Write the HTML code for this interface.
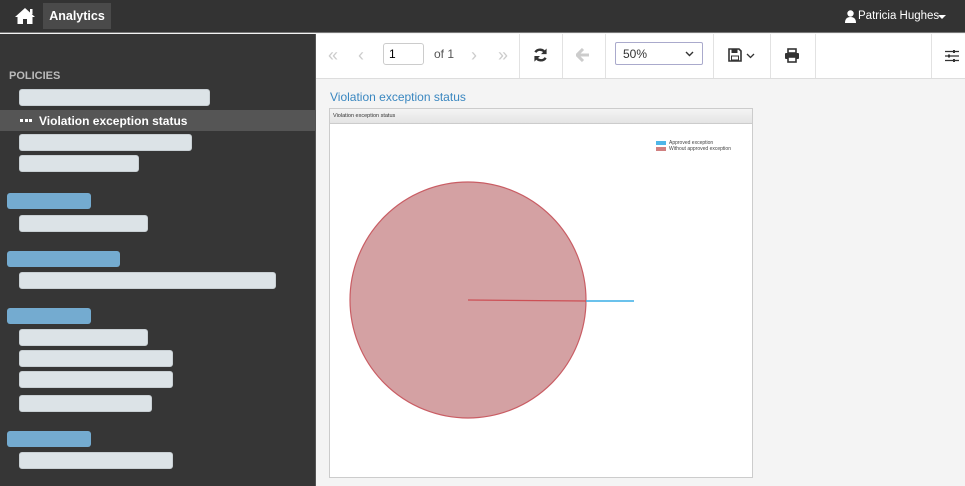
<!DOCTYPE html>
<html><head><meta charset="utf-8"><style>
*{box-sizing:border-box;margin:0;padding:0}
body{width:965px;height:486px;overflow:hidden;font-family:"Liberation Sans",sans-serif;background:#f4f4f4;position:relative}
.top{position:absolute;left:0;top:0;width:965px;height:33px;background:#333;border-bottom:1px solid #777}
.side{position:absolute;left:0;top:34px;width:316px;height:452px;background:#363636;border-right:1px solid #555}
.b{position:absolute;border-radius:3px;background:#dce3e7;border:1px solid #c8cfd3;height:17px}
.bl{position:absolute;border-radius:3px;background:#74abd0;height:16px}
.tb{position:absolute;left:316px;top:34px;width:649px;height:45px;background:#fff;border-bottom:1px solid #ddd}
.sep{position:absolute;top:0;width:1px;height:44px;background:#e2e2e2}
.g{position:absolute;color:#ccc;font-size:18px;top:11px}
</style></head><body>
<div class="top">
 <svg style="position:absolute;left:14px;top:7px" width="22" height="18" viewBox="0 0 22 18"><path d="M11 1 L1 10 L3.5 10 L3.5 17 L9 17 L9 12 L13 12 L13 17 L18.5 17 L18.5 10 L21 10 Z" fill="#fff"/><rect x="16" y="2" width="2.5" height="5" fill="#fff"/></svg>
 <div style="position:absolute;left:43px;top:3px;width:68px;height:26px;background:#4a4a4a;color:#fff;font-size:12.5px;font-weight:bold;line-height:26px;text-align:center">Analytics</div>
 <svg style="position:absolute;left:845px;top:10px" width="11" height="13" viewBox="0 0 11 13"><circle cx="5.5" cy="3.5" r="3.2" fill="#fff"/><path d="M0 13 Q0 7 5.5 7 Q11 7 11 13Z" fill="#fff"/></svg>
 <div style="position:absolute;left:858px;top:10px;color:#fff;font-size:11.5px">Patricia Hughes</div>
 <div style="position:absolute;left:938px;top:15px;border:4px solid transparent;border-top:4px solid #fff;border-bottom:0"></div>
</div>
<div class="side">
 <div style="position:absolute;left:9px;top:36px;color:#bbb;font-size:11px;font-weight:bold">POLICIES</div>
 <div class="b" style="left:19px;top:55px;width:191px"></div>
 <div style="position:absolute;left:0;top:76px;width:315px;height:21px;background:#555"></div>
 <div style="position:absolute;left:20px;top:85px;width:12px;height:3px;border-left:3px solid #fff;border-right:3px solid #fff;"><div style="margin:0 auto;width:3px;height:3px;background:#fff"></div></div>
 <div style="position:absolute;left:39px;top:80px;color:#fff;font-size:12px;font-weight:bold">Violation exception status</div>
 <div class="b" style="left:19px;top:100px;width:173px"></div>
 <div class="b" style="left:19px;top:121px;width:120px"></div>
 <div class="bl" style="left:7px;top:159px;width:84px"></div>
 <div class="b" style="left:19px;top:181px;width:129px"></div>
 <div class="bl" style="left:7px;top:217px;width:113px"></div>
 <div class="b" style="left:19px;top:238px;width:257px"></div>
 <div class="bl" style="left:7px;top:274px;width:84px"></div>
 <div class="b" style="left:19px;top:295px;width:129px"></div>
 <div class="b" style="left:19px;top:316px;width:154px"></div>
 <div class="b" style="left:19px;top:337px;width:154px"></div>
 <div class="b" style="left:19px;top:361px;width:133px"></div>
 <div class="bl" style="left:7px;top:397px;width:84px"></div>
 <div class="b" style="left:19px;top:418px;width:154px"></div>
</div>
<div class="tb">
 <div class="g" style="left:12px">«</div><div class="g" style="left:42px">‹</div>
 <div style="position:absolute;left:67px;top:9px;width:41px;height:22px;border:1px solid #ccc;border-radius:3px;font-size:12px;padding:3px 5px">1</div>
 <div style="position:absolute;left:118px;top:13px;font-size:12px;color:#555">of 1</div>
 <div class="g" style="left:155px">›</div><div class="g" style="left:182px">»</div>
 <div class="sep" style="left:203px"></div>
 <svg style="position:absolute;left:217px;top:13px" width="15" height="16" viewBox="0 0 16 16"><path d="M13 6 A6 6 0 0 0 2.5 5 M3 10 A6 6 0 0 0 13.5 11" stroke="#333" stroke-width="2.6" fill="none"/><path d="M14.5 1 L14.5 7 L8.5 7Z M1.5 15 L1.5 9 L7.5 9Z" fill="#333"/></svg>
 <div class="sep" style="left:246px"></div>
 <svg style="position:absolute;left:260px;top:14px" width="14" height="14" viewBox="0 0 14 14"><path d="M7 1 L1 7 L7 13 M1 7 L13 7" stroke="#ccc" stroke-width="3" fill="none"/></svg>
 <div class="sep" style="left:289px"></div>
 <div style="position:absolute;left:299px;top:8px;width:88px;height:23px;border:1px solid #aac;border-radius:2px;font-size:12px;padding:4px 7px;color:#333">50%<svg style="position:absolute;right:8px;top:8px" width="9" height="6" viewBox="0 0 9 6"><path d="M1 1 L4.5 4.5 L8 1" stroke="#333" stroke-width="1.4" fill="none"/></svg></div>
 <div class="sep" style="left:397px"></div>
 <svg style="position:absolute;left:412px;top:14px" width="14" height="14" viewBox="0 0 14 14"><path d="M1 1 H11 L13 3 V13 H1 Z" stroke="#333" stroke-width="1.6" fill="none"/><rect x="3.5" y="1" width="6" height="4" fill="#333"/><rect x="3.5" y="8" width="7" height="4" fill="none" stroke="#333"/></svg>
 <svg style="position:absolute;left:430px;top:19px" width="9" height="6" viewBox="0 0 9 6"><path d="M1 1 L4.5 4.5 L8 1" stroke="#333" stroke-width="1.3" fill="none"/></svg>
 <div class="sep" style="left:454px"></div>
 <svg style="position:absolute;left:468px;top:14px" width="16" height="15" viewBox="0 0 16 15"><rect x="4" y="1" width="8" height="4" fill="none" stroke="#333" stroke-width="1.6"/><rect x="1" y="5" width="14" height="6" rx="1" fill="#333"/><rect x="4" y="9" width="8" height="5" fill="#fff" stroke="#333" stroke-width="1.6"/></svg>
 <div class="sep" style="left:499px"></div>
 <div class="sep" style="left:615px"></div>
 <svg style="position:absolute;left:629px;top:15px" width="14" height="14" viewBox="0 0 14 14"><path d="M0 2.5H14M0 7H14M0 11.5H14" stroke="#333" stroke-width="1.2"/><rect x="8" y="1" width="2" height="3" fill="#333"/><rect x="3" y="5.5" width="2" height="3" fill="#333"/><rect x="8" y="10" width="2" height="3" fill="#333"/></svg>
</div>
<div style="position:absolute;left:330px;top:90px;color:#3a87c0;font-size:12px">Violation exception status</div>
<div style="position:absolute;left:329px;top:108px;width:424px;height:370px;background:#fff;border:1px solid #ccc">
 <div style="height:15px;background:linear-gradient(#f4f4f4,#e4e4e4);border-bottom:1px solid #ccc;font-size:5.5px;padding:4px 3px;color:#333">Violation exception status</div>
 <div style="position:absolute;left:326px;top:32px;width:10px;height:4px;background:#4fb6e8"></div>
 <div style="position:absolute;left:339px;top:31px;font-size:5px;color:#444">Approved exception</div>
 <div style="position:absolute;left:326px;top:38px;width:10px;height:4px;background:#d08080"></div>
 <div style="position:absolute;left:339px;top:37px;font-size:5px;color:#444">Without approved exception</div>
</div>
<svg style="position:absolute;left:0;top:0" width="965" height="486">
 <circle cx="468" cy="300" r="118" fill="#d4a1a3" stroke="#c95d64" stroke-width="1.2"/>
 <line x1="468" y1="300" x2="586" y2="301" stroke="#cc4f55" stroke-width="1.3"/>
 <line x1="586" y1="301" x2="634" y2="301" stroke="#3aaee6" stroke-width="1.5"/>
</svg>
</body></html>
